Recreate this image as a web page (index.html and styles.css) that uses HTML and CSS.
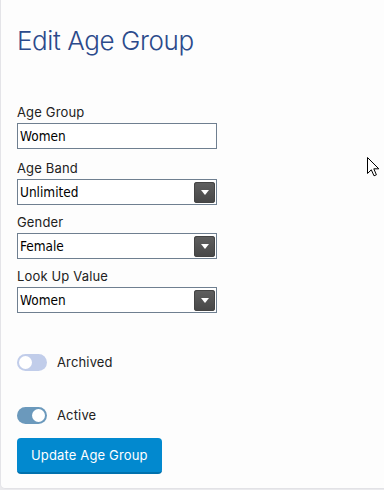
FILE: index.html
```html
<!DOCTYPE html>
<html lang="en">
<head>
<meta charset="utf-8">
<title>Edit Age Group</title>
<link rel="stylesheet" href="styles.css">
</head>
<body>
<div class="card">
  <h1 class="title">Edit Age Group</h1>
  <form class="form">
    <div class="field field-first">
      <label class="label" for="ag">Age Group</label>
      <input class="input" id="ag" type="text" value="Women">
    </div>
    <div class="field">
      <label class="label">Age Band</label>
      <div class="select"><span class="select-value">Unlimited</span><span class="select-btn"><span class="tri"></span></span></div>
    </div>
    <div class="field">
      <label class="label">Gender</label>
      <div class="select"><span class="select-value">Female</span><span class="select-btn"><span class="tri"></span></span></div>
    </div>
    <div class="field">
      <label class="label">Look Up Value</label>
      <div class="select"><span class="select-value">Women</span><span class="select-btn"><span class="tri"></span></span></div>
    </div>
    <div class="toggle-row toggle-archived">
      <span class="toggle toggle-off"><span class="knob"></span></span>
      <span class="toggle-label">Archived</span>
    </div>
    <div class="toggle-row toggle-active">
      <span class="toggle toggle-on"><span class="knob"></span></span>
      <span class="toggle-label">Active</span>
    </div>
    <button class="btn" type="button">Update Age Group</button>
  </form>
</div>
<svg class="cursor" width="13" height="20" viewBox="0 0 13 20">
  <path d="M0.5 0.5 L0.5 16.5 L4.3 12.8 L7 18.8 L9.4 17.8 L6.8 11.8 L11.8 11.8 Z" fill="#fff" stroke="#000" stroke-width="1" stroke-linejoin="miter"/>
</svg>
</body>
</html>
```
FILE: styles.css
```css
html, body {
  margin: 0;
  padding: 0;
}
body {
  width: 384px;
  height: 490px;
  overflow: hidden;
  background: #eaeaed;
  font-family: "Inter", "Open Sans", sans-serif;
  color: #222;
  position: relative;
}
.card {
  box-sizing: border-box;
  height: 489px;
  background: #fdfdfd;
  border-left: 1px solid #e4e4e8;
  border-bottom: 1px solid #e2e2e6;
  border-radius: 0 0 0 5px;
  padding: 25px 16px 0 16px;
}
.title {
  margin: 0;
  font-size: 26px;
  line-height: 31px;
  font-weight: 300;
  color: #2b4a8b;
  letter-spacing: -0.4px;
}
.form {
  margin: 46px 0 0 0;
  display: flex;
  flex-direction: column;
}
.field {
  display: flex;
  flex-direction: column;
  margin-bottom: 7px;
}
.field-first {
  margin-bottom: 9px;
}
.label {
  font-size: 13px;
  line-height: 21px;
  height: 21px;
  color: #222;
  letter-spacing: 0.15px;
}
.input, .select {
  box-sizing: border-box;
  width: 200px;
  height: 26px;
  border: 1px solid #6f7f90;
  background: #fff;
  font-family: "DejaVu Sans Condensed", "DejaVu Sans", sans-serif;
  font-size: 13.5px;
  color: #000;
  margin: 0;
}
.input {
  padding: 0 2px;
  outline: none;
}
.select {
  display: flex;
  align-items: center;
  justify-content: space-between;
  padding: 0 0 0 2px;
}
.select-value {
  line-height: 24px;
}
.select-btn {
  width: 21px;
  height: 21px;
  margin-right: 1px;
  border-radius: 3px;
  background: linear-gradient(#606060, #474747);
  box-shadow: inset 0 0 0 1px #444;
  display: flex;
  align-items: center;
  justify-content: center;
}
.tri {
  width: 0;
  height: 0;
  border-left: 4px solid transparent;
  border-right: 4px solid transparent;
  border-top: 5px solid #fff;
  margin-top: 1px;
}
.toggle-row {
  display: flex;
  align-items: center;
  height: 20px;
  gap: 10px;
}
.toggle-archived {
  margin-top: 32px;
}
.toggle-active {
  margin-top: 33px;
}
.toggle {
  box-sizing: border-box;
  width: 30px;
  height: 17px;
  border-radius: 9px;
  display: flex;
  align-items: center;
  padding: 0 2px;
}
.toggle-off {
  background: #c1cdea;
  justify-content: flex-start;
}
.toggle-on {
  background: #6b99bc;
  justify-content: flex-end;
}
.knob {
  width: 13px;
  height: 13px;
  border-radius: 50%;
  background: #fff;
}
.toggle-label {
  font-size: 13px;
  color: #222;
  letter-spacing: 0.15px;
}
.btn {
  align-self: flex-start;
  margin-top: 13px;
  box-sizing: border-box;
  height: 36px;
  padding: 0 14px;
  border: none;
  border-bottom: 2px solid #0071ad;
  border-radius: 4px;
  background: #0289cf;
  color: #fff;
  font-family: "Inter", "Open Sans", sans-serif;
  font-size: 13px;
  letter-spacing: 0.15px;
  cursor: pointer;
}
.cursor {
  position: absolute;
  left: 367px;
  top: 157px;
}
```
